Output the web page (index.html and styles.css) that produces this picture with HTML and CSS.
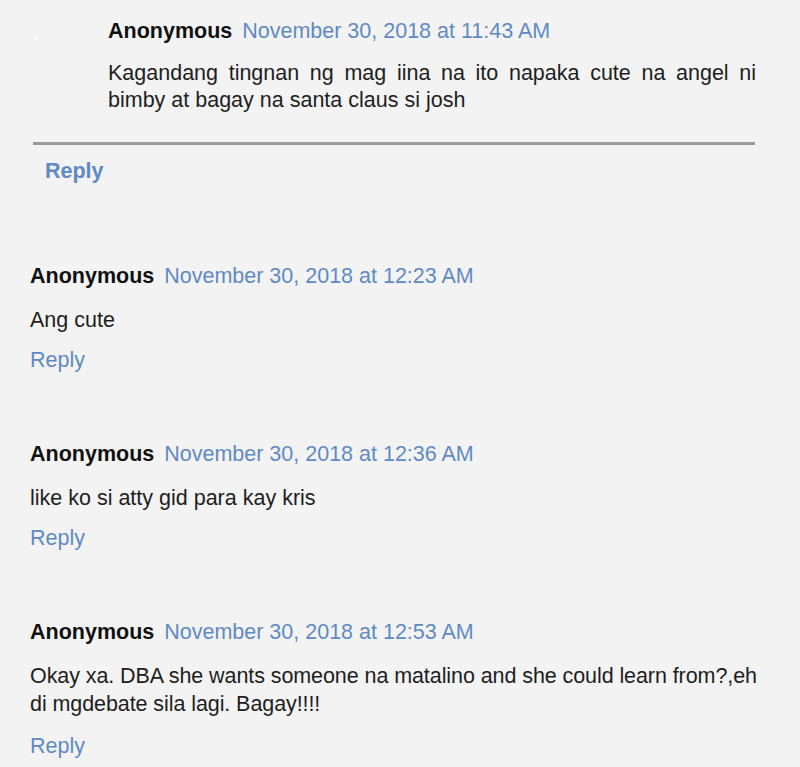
FILE: index.html
```html
<!DOCTYPE html>
<html lang="en">
<head>
<meta charset="UTF-8" />
<meta name="viewport" content="width=device-width, initial-scale=1" />
<title>Comments</title>
<link rel="stylesheet" href="styles.css">
</head>
<body>
<div class="comments">
  <div class="thread">
    <div class="reply-item">
      <span class="avatar-dot"></span>
      <div class="comment nested">
        <div class="comment-header">
          <span class="author">Anonymous</span>
          <a class="date" href="#">November 30, 2018 at 11:43 AM</a>
        </div>
        <p class="body justify">Kagandang tingnan ng mag iina na ito napaka cute na angel ni bimby at bagay na santa claus si josh</p>
      </div>
    </div>
    <div class="thread-actions">
      <a class="thread-reply" href="#">Reply</a>
    </div>
  </div>

  <div class="comment">
    <div class="comment-header">
      <span class="author">Anonymous</span>
      <a class="date" href="#">November 30, 2018 at 12:23 AM</a>
    </div>
    <p class="body">Ang cute</p>
    <a class="reply" href="#">Reply</a>
  </div>

  <div class="comment">
    <div class="comment-header">
      <span class="author">Anonymous</span>
      <a class="date" href="#">November 30, 2018 at 12:36 AM</a>
    </div>
    <p class="body">like ko si atty gid para kay kris</p>
    <a class="reply" href="#">Reply</a>
  </div>

  <div class="comment">
    <div class="comment-header">
      <span class="author">Anonymous</span>
      <a class="date" href="#">November 30, 2018 at 12:53 AM</a>
    </div>
    <p class="body tight">Okay xa. DBA she wants someone na matalino and she could learn from?,eh di mgdebate sila lagi. Bagay!!!!</p>
    <a class="reply" href="#">Reply</a>
  </div>
</div>
</body>
</html>
```

FILE: styles.css
```css
:root {
  --page-bg: #f3f3f3;
  --text: #1e1e1e;
  --link: #5f8ac4;
  --rule: #9a9a9a;
  --font-family: 'Liberation Sans', Arial, sans-serif;
}

* {
  box-sizing: border-box;
}

body {
  margin: 0;
  background: var(--page-bg);
  color: var(--text);
  font-family: var(--font-family);
  font-size: 21.5px;
  width: 800px;
  height: 767px;
  overflow: hidden;
}

a {
  text-decoration: none;
  color: var(--link);
}

.comments {
  padding: 18px 30px 0 30px;
}

/* nested reply block at the top */
.thread {
  width: 726px;
  margin-bottom: 79px;
}

.reply-item {
  display: flex;
  padding-left: 5px;
}

.avatar-dot {
  width: 3px;
  height: 2px;
  margin-top: 20px;
  background: #ffffff;
  flex: none;
}

.comment.nested {
  margin: 0 0 0 70px;
  padding-bottom: 28px;
  flex: 1;
}

.thread-actions {
  border-top: 3px solid var(--rule);
  margin-left: 3px;
  margin-right: 1px;
  padding: 13px 0 0 12px;
  line-height: 26px;
}

.thread-reply {
  font-weight: bold;
}

/* regular comments */
.comment {
  margin-bottom: 68px;
}

.comment:last-child {
  margin-bottom: 0;
}

.comment-header {
  line-height: 26px;
}

.author {
  font-weight: bold;
  color: #111111;
  margin-right: 4px;
}

.body {
  margin: 17px 0 13px;
  line-height: 28px;
}

.body.justify {
  text-align: justify;
  margin: 16px 0 0;
  line-height: 27px;
}

.body.tight {
  letter-spacing: -0.08px;
  margin-bottom: 15px;
}

.reply {
  display: inline-block;
  line-height: 26px;
}
```
